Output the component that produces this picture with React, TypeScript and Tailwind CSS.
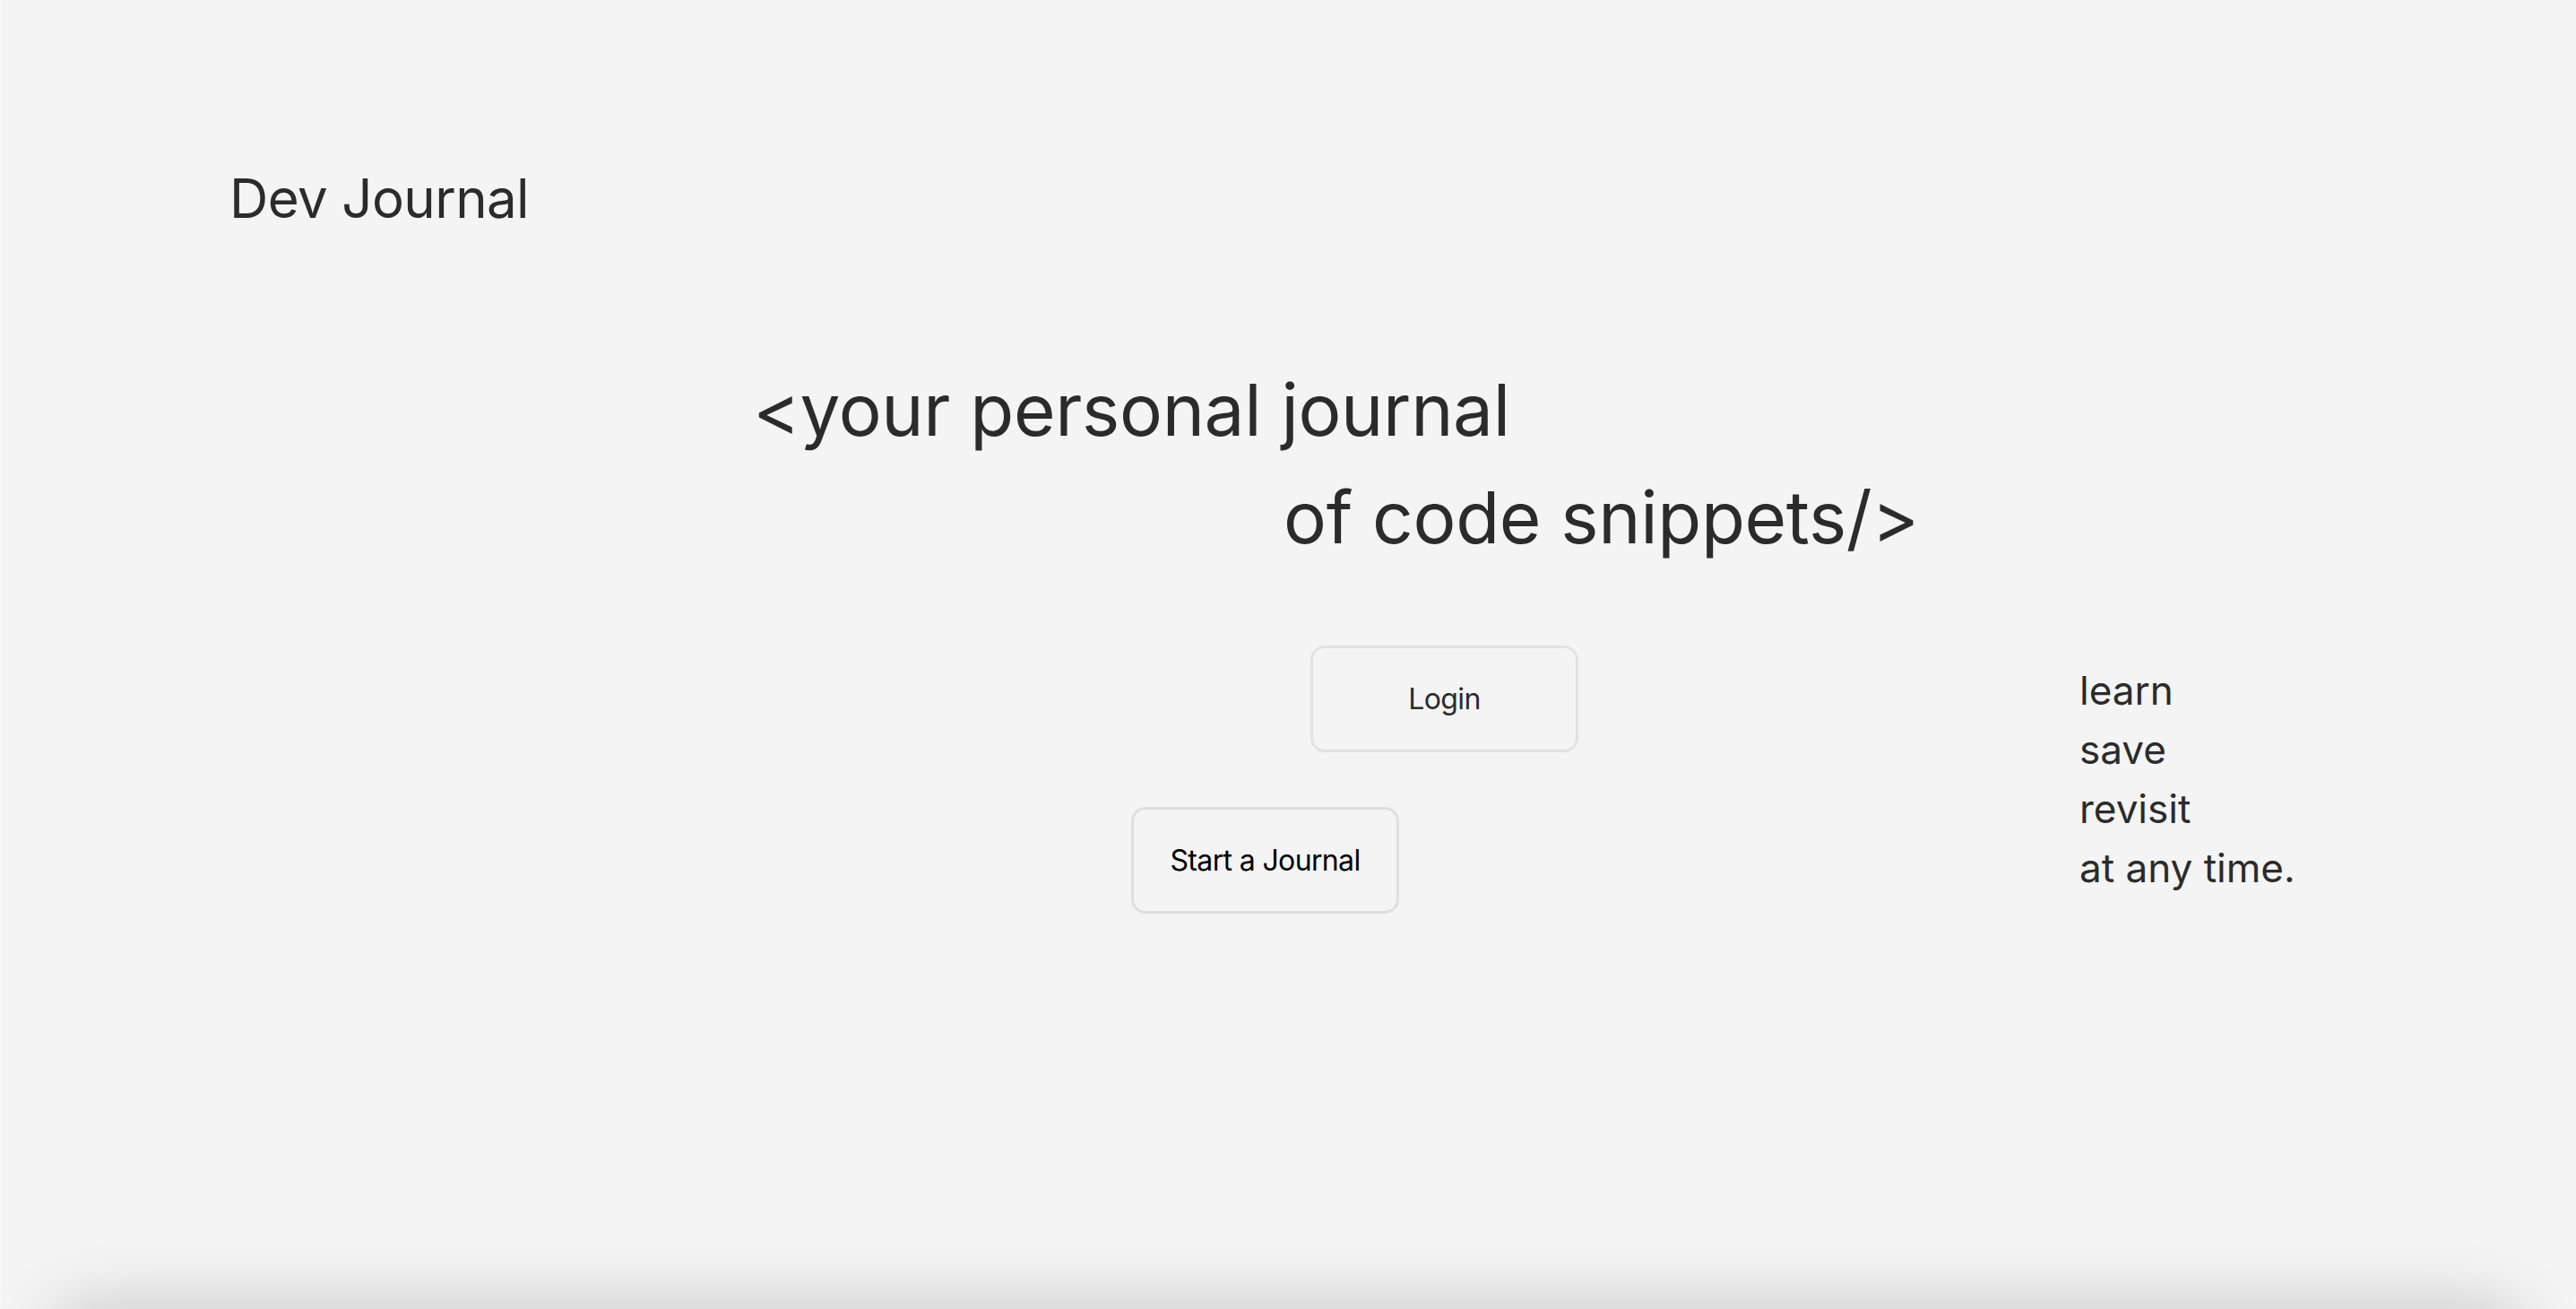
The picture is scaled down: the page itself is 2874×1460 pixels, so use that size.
import React from 'react';

const taglines = ['learn', 'save', 'revisit', 'at any time.'];

const App: React.FC = () => {
  return (
    <div className="min-h-screen bg-[#f4f4f4] font-[Inter,sans-serif] text-[#2b2b2b] overflow-hidden">
      <section className="h-screen border-l-2 border-[#f8f8f8]">
        <header className="pt-[176px] pl-[254px]">
          <h1 className="text-[60px] leading-[1.5] font-normal tracking-[-0.01em]">Dev Journal</h1>
        </header>

        <div className="mt-[131px] text-[80px] leading-[1.5] tracking-[-0.004em]">
          <p className="pl-[838px]">&lt;your personal journal</p>
          <p className="pl-[1430px]">of code snippets/&gt;</p>
        </div>

        <div className="mt-[83px] flex items-start">
          <div className="w-[1759px] flex flex-col">
            <button className="ml-[1460px] w-[299px] h-[119px] rounded-[16px] border-[3px] border-[#e2e2e2] text-[32px] tracking-[-0.02em] text-[#2b2b2b]">
              Login
            </button>
            <button className="ml-[1260px] mt-[61px] w-[299px] h-[119px] rounded-[16px] border-[3px] border-[#dedede] text-[32px] tracking-[-0.02em] text-black">
              Start a Journal
            </button>
          </div>
          <ul className="ml-[559px] mt-[17px] text-[44px] leading-[1.5]">
            {taglines.map(t => (
              <li key={t}>{t}</li>
            ))}
          </ul>
        </div>
      </section>

      <section className="mx-[64px] h-[400px] rounded-[24px] bg-[#f4f4f4] shadow-[0_0_80px_rgba(0,0,0,0.2)]" />
    </div>
  );
};

export default App;
